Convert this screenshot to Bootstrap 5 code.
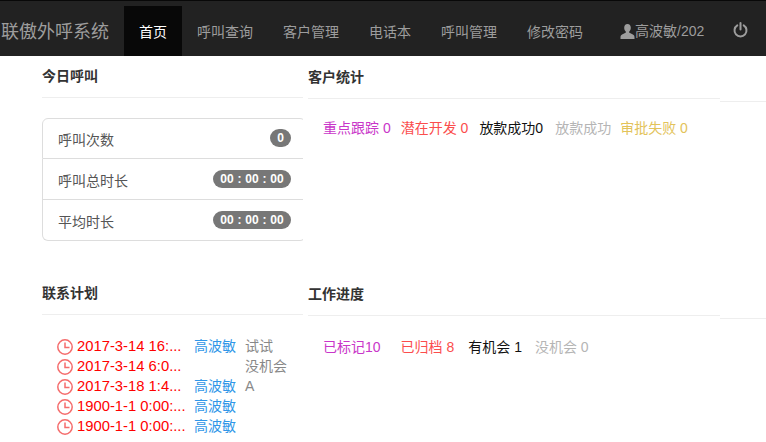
<!DOCTYPE html>
<html lang="zh">
<head>
<meta charset="utf-8">
<title>联傲外呼系统</title>
<link href="https://cdn.jsdelivr.net/npm/bootstrap@5.3.0/dist/css/bootstrap.min.css" rel="stylesheet">
<style>
html,body{height:442px;overflow:hidden;background:#fff}
body{font-family:"Liberation Sans","Noto Sans CJK SC",sans-serif;font-size:14px;line-height:20px;color:#555}
.topbar{height:56px;background:#222;border-top:1px solid #080808;padding:5px 0 0 0;flex-wrap:nowrap;align-items:stretch;justify-content:flex-start}
.brandname{font-size:18px;color:#9d9d9d;width:124px;padding:0 0 0 1px;line-height:52px;white-space:nowrap;margin:0}
.topbar .nav-link{color:#9d9d9d;font-size:14px;padding:0 15px;line-height:52px;white-space:nowrap;height:50px}
.topbar .nav-link.active{background:#080808;color:#fff}
.topnav{flex-wrap:nowrap}
.userlink{color:#9d9d9d;font-size:14px;line-height:52px;height:50px;margin-left:22px;display:flex;align-items:center;white-space:nowrap}
.powerlink{margin-left:29px;margin-top:16px;display:block;height:16px}
.powerlink svg{display:block}
.mainrow{display:grid;grid-template-columns:261px 412px;column-gap:5px;padding-left:42px;position:relative}
.leftpane{overflow:hidden}
.panehead{font-size:14px;font-weight:700;color:#333;line-height:20px;margin:0;padding-top:10px;padding-bottom:11px;border-bottom:1px solid #eee}
.rightpane .panehead{padding-top:11px;padding-bottom:11px}
.rightpane .panehead.lowerright{padding-top:12px}
.hrtail{position:absolute;left:720px;right:0;height:1px;background:#eee}
.tail-a{top:45px}
.tail-b{top:262px}
.statlist{margin-top:20px;width:264px;font-size:14px;--bs-list-group-border-color:#ddd}
.statlist .list-group-item{height:41px;padding:12px 15px 0 15px;color:#555;display:flex;justify-content:space-between;line-height:20px;border-right:1px solid #ddd}
.statlist .list-group-item:first-child{padding-top:11px}
.pillval{background:#777;color:#fff;font-size:12px;font-weight:700;line-height:12px;border-radius:10px;padding:3px 7px;height:18px;margin-top:-1px;margin-right:-1px;letter-spacing:.2px}
.topblock{height:217px}
.rightpane .topblock{height:216px}
.statline{padding:19px 15px 0 15px;display:flex;font-size:14px;line-height:20px}
.statline.lowerline{padding-top:21px}
.gap-a{margin-right:10px}
.gap-b{margin-right:11px}
.gap-g{margin-right:12px}
.gap-c{margin-right:9px}
.gap-d{margin-right:20px}
.gap-e{margin-right:14px}
.gap-f{margin-right:13px}
.c-pur{color:#c936c9}.c-red{color:#fb4d4d}.c-blk{color:#111}.c-gry{color:#b5b5b5}.c-yel{color:#e3c35a}
.planlist{padding:21px 0 0 15px;margin:0;list-style:none}
.planlist li{display:grid;grid-template-columns:137px 51px auto;height:20px;line-height:20px;font-size:14px;white-space:nowrap}
.plantime{color:#f00;display:flex;align-items:center;gap:4px;font-size:14.8px}
.planwho{color:#2f96e8}
.plannote{color:#888}
.clockicon{flex:none;display:block;margin-top:2px}
</style>
</head>
<body>
<nav class="navbar topbar d-flex">
  <p class="brandname">联傲外呼系统</p>
  <ul class="nav topnav">
    <li class="nav-item"><a class="nav-link active" href="#">首页</a></li>
    <li class="nav-item"><a class="nav-link" href="#">呼叫查询</a></li>
    <li class="nav-item"><a class="nav-link" href="#">客户管理</a></li>
    <li class="nav-item"><a class="nav-link" href="#">电话本</a></li>
    <li class="nav-item"><a class="nav-link" href="#">呼叫管理</a></li>
    <li class="nav-item"><a class="nav-link" href="#">修改密码</a></li>
  </ul>
  <a class="userlink text-decoration-none" href="#"><svg width="15" height="15" viewBox="0 0 15 15" fill="#9d9d9d"><path d="M7.5 0C9.6 0 10.8 1.5 10.8 3.7c0 1.6-.7 3-1.5 3.8-.3.4-.3 1 .2 1.3l3.4 1.8c1 .5 1.6 1.4 1.6 2.6V15H.5v-1.8c0-1.2.6-2.1 1.6-2.6l3.4-1.8c.5-.3.5-.9.2-1.3C4.900 6.700 4.200 5.300 4.200 3.700 4.200 1.500 5.400 0 7.500 0z"/></svg>高波敏/202</a>
  <a class="powerlink" href="#" aria-label="退出"><svg width="15" height="16" viewBox="0 0 15 16" fill="none" stroke="#9d9d9d" stroke-width="2" stroke-linecap="round"><path d="M4.300 3.300a6 6 0 1 0 6.400 0"/><path d="M7.500 1v6.500"/></svg></a>
</nav>
<main class="mainrow">
  <span class="hrtail tail-a"></span>
  <span class="hrtail tail-b"></span>
  <section class="leftpane">
    <div class="topblock">
      <h2 class="panehead">今日呼叫</h2>
      <ul class="list-group statlist">
        <li class="list-group-item">呼叫次数<span class="pillval">0</span></li>
        <li class="list-group-item">呼叫总时长<span class="pillval">00 : 00 : 00</span></li>
        <li class="list-group-item">平均时长<span class="pillval">00 : 00 : 00</span></li>
      </ul>
    </div>
    <h2 class="panehead">联系计划</h2>
    <ul class="planlist">
      <li><span class="plantime"><svg class="clockicon" width="16" height="16" viewBox="0 0 16 16" fill="none" stroke="#f56c6c" stroke-width="1.500"><circle cx="8" cy="8" r="7.200"/><path d="M8 3.500V8.500H12.500"/></svg>2017-3-14 16:...</span><span class="planwho">高波敏</span><span class="plannote">试试</span></li>
      <li><span class="plantime"><svg class="clockicon" width="16" height="16" viewBox="0 0 16 16" fill="none" stroke="#f56c6c" stroke-width="1.500"><circle cx="8" cy="8" r="7.200"/><path d="M8 3.500V8.500H12.500"/></svg>2017-3-14 6:0...</span><span class="planwho"></span><span class="plannote">没机会</span></li>
      <li><span class="plantime"><svg class="clockicon" width="16" height="16" viewBox="0 0 16 16" fill="none" stroke="#f56c6c" stroke-width="1.500"><circle cx="8" cy="8" r="7.200"/><path d="M8 3.500V8.500H12.500"/></svg>2017-3-18 1:4...</span><span class="planwho">高波敏</span><span class="plannote">A</span></li>
      <li><span class="plantime"><svg class="clockicon" width="16" height="16" viewBox="0 0 16 16" fill="none" stroke="#f56c6c" stroke-width="1.500"><circle cx="8" cy="8" r="7.200"/><path d="M8 3.500V8.500H12.500"/></svg>1900-1-1 0:00:...</span><span class="planwho">高波敏</span><span class="plannote"></span></li>
      <li><span class="plantime"><svg class="clockicon" width="16" height="16" viewBox="0 0 16 16" fill="none" stroke="#f56c6c" stroke-width="1.500"><circle cx="8" cy="8" r="7.200"/><path d="M8 3.500V8.500H12.500"/></svg>1900-1-1 0:00:...</span><span class="planwho">高波敏</span><span class="plannote"></span></li>
    </ul>
  </section>
  <section class="rightpane">
    <div class="topblock">
      <h2 class="panehead">客户统计</h2>
      <div class="statline">
        <span class="c-pur gap-a">重点跟踪 0</span><span class="c-red gap-b">潜在开发 0</span><span class="c-blk gap-g">放款成功0</span><span class="c-gry gap-c">放款成功</span><span class="c-yel">审批失败 0</span>
      </div>
    </div>
    <h2 class="panehead lowerright">工作进度</h2>
    <div class="statline lowerline">
      <span class="c-pur gap-d">已标记10</span><span class="c-red gap-e">已归档 8</span><span class="c-blk gap-f">有机会 1</span><span class="c-gry">没机会 0</span>
    </div>
  </section>
</main>
<script src="https://cdn.jsdelivr.net/npm/bootstrap@5.3.0/dist/js/bootstrap.bundle.min.js"></script>
</body>
</html>
